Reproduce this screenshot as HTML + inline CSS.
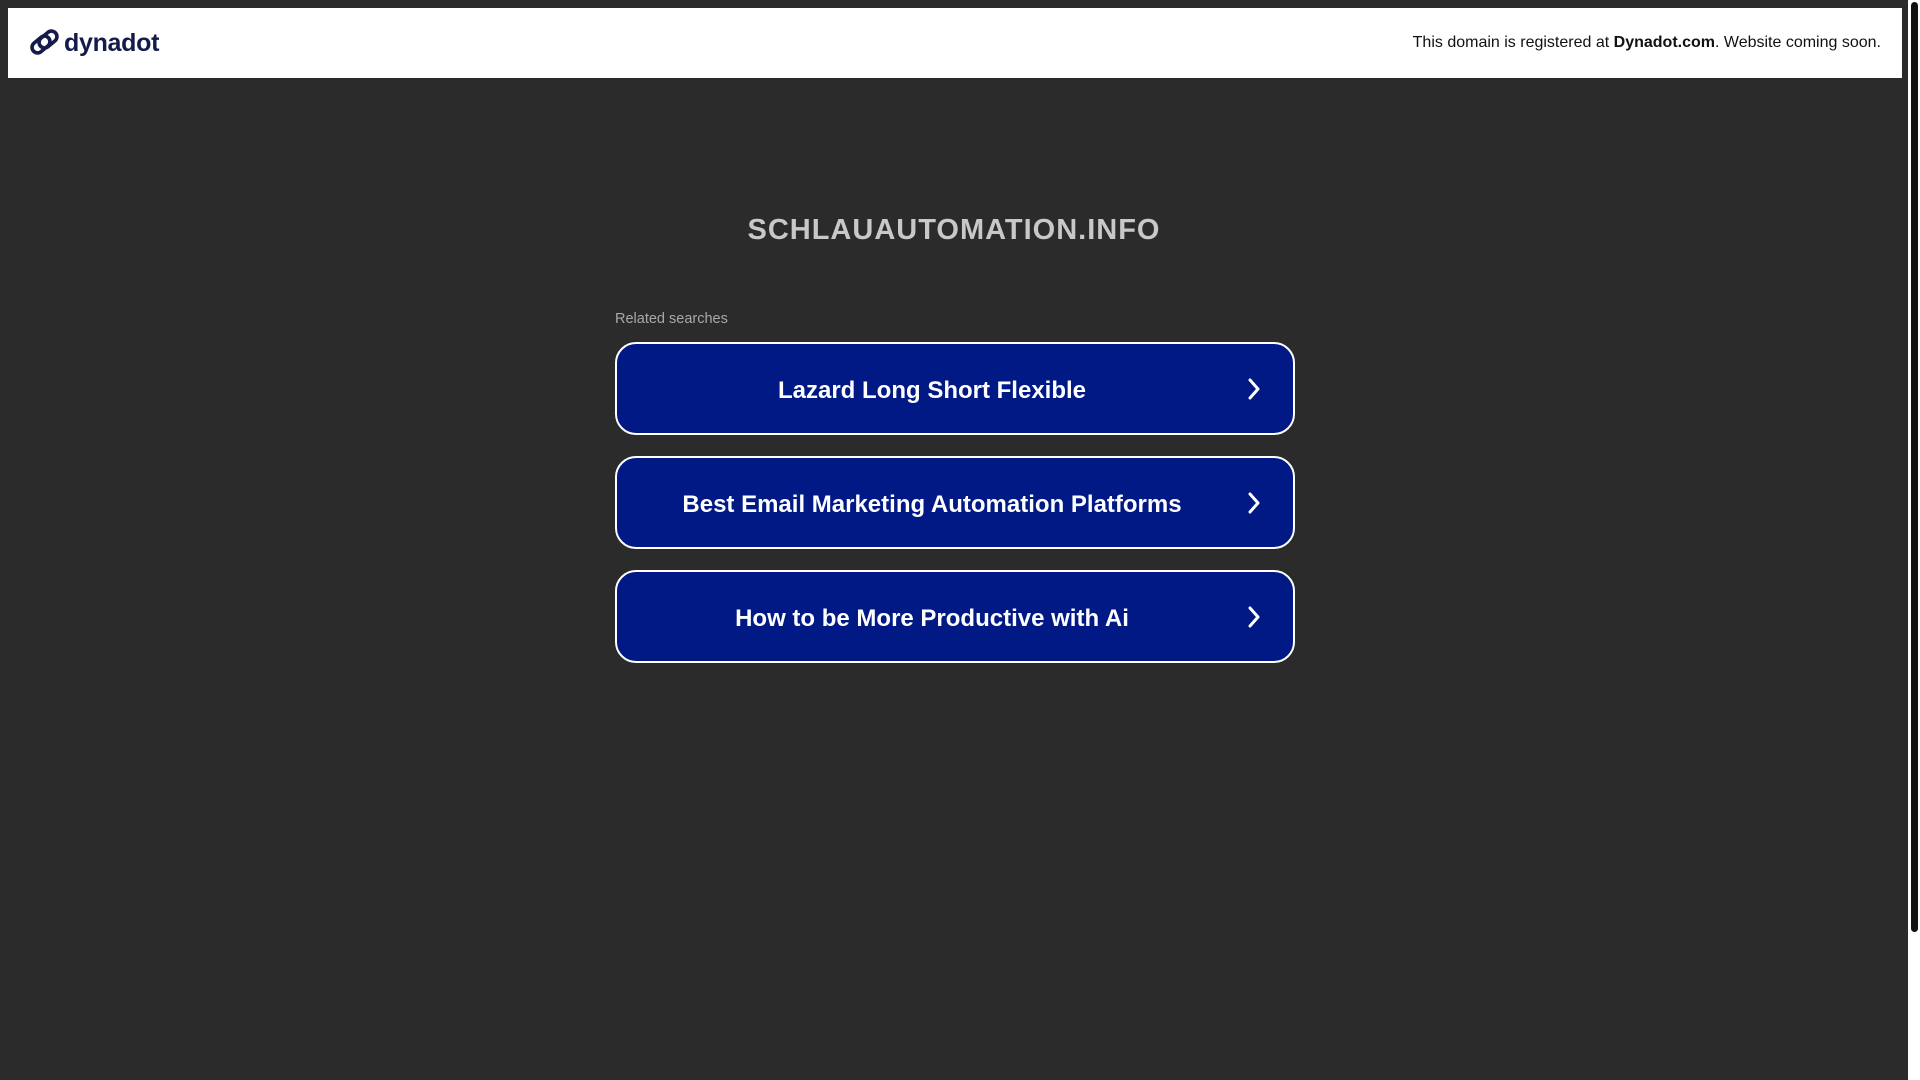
<!DOCTYPE html>
<html><head><meta charset="utf-8"><style>
html,body{margin:0;padding:0;}
body{width:1920px;height:1080px;background:#2b2b2b;position:relative;overflow:hidden;font-family:"Liberation Sans",Arial,sans-serif;}
.hdr{position:absolute;left:8px;top:8px;width:1894px;height:70px;background:#fff;}
.logo{position:absolute;left:20px;top:18px;}
.logotxt{position:absolute;left:56px;top:21px;font-size:25px;font-weight:bold;color:#141a4a;letter-spacing:-0.3px;}
.reg{position:absolute;right:21px;top:26px;font-size:16px;color:#111;}
.title{position:absolute;left:0;width:1908px;top:214px;text-align:center;font-size:29px;font-weight:bold;color:#c8c8c8;letter-spacing:1px;}
.rel{position:absolute;left:615px;top:311px;font-size:14.5px;color:#a8a8a8;}
.btn{position:absolute;left:615px;width:676px;height:89px;border:2px solid #fff;border-radius:21px;background:#011985;}
.btn span{position:absolute;left:0;width:630px;top:2px;line-height:89px;text-align:center;color:#fff;font-weight:bold;font-size:24px;}
.btn svg{position:absolute;left:630px;top:34px;}
.sb{position:absolute;left:1908px;top:0;width:12px;height:1080px;background:#fff;}
.th{position:absolute;left:1911px;top:2px;width:7px;height:930px;background:#111;border-radius:4px;}
</style></head><body>
<div class="hdr">
 <svg class="logo" width="34" height="34" viewBox="0 0 34 34">
  <g fill="none" stroke="#141a4a" stroke-width="3.6">
   <rect x="3" y="13" width="20" height="11" rx="5.5" transform="rotate(-40 13 18.5)"/>
   <rect x="10" y="8" width="20" height="11" rx="5.5" transform="rotate(-40 20 13.5)"/>
  </g>
 </svg>
 <div class="logotxt">dynadot</div>
 <div class="reg">This domain is registered at <b>Dynadot.com</b>. Website coming soon.</div>
</div>
<div class="title">SCHLAUAUTOMATION.INFO</div>
<div class="rel">Related searches</div>
<div class="btn" style="top:342px"><span>Lazard Long Short Flexible</span><svg width="14" height="22" viewBox="0 0 14 22"><path d="M3 2 L11 11 L3 20" fill="none" stroke="#fff" stroke-width="3" stroke-linecap="round" stroke-linejoin="round"/></svg></div>
<div class="btn" style="top:456px"><span>Best Email Marketing Automation Platforms</span><svg width="14" height="22" viewBox="0 0 14 22"><path d="M3 2 L11 11 L3 20" fill="none" stroke="#fff" stroke-width="3" stroke-linecap="round" stroke-linejoin="round"/></svg></div>
<div class="btn" style="top:570px"><span>How to be More Productive with Ai</span><svg width="14" height="22" viewBox="0 0 14 22"><path d="M3 2 L11 11 L3 20" fill="none" stroke="#fff" stroke-width="3" stroke-linecap="round" stroke-linejoin="round"/></svg></div>
<div class="sb"></div><div class="th"></div>
</body></html>
